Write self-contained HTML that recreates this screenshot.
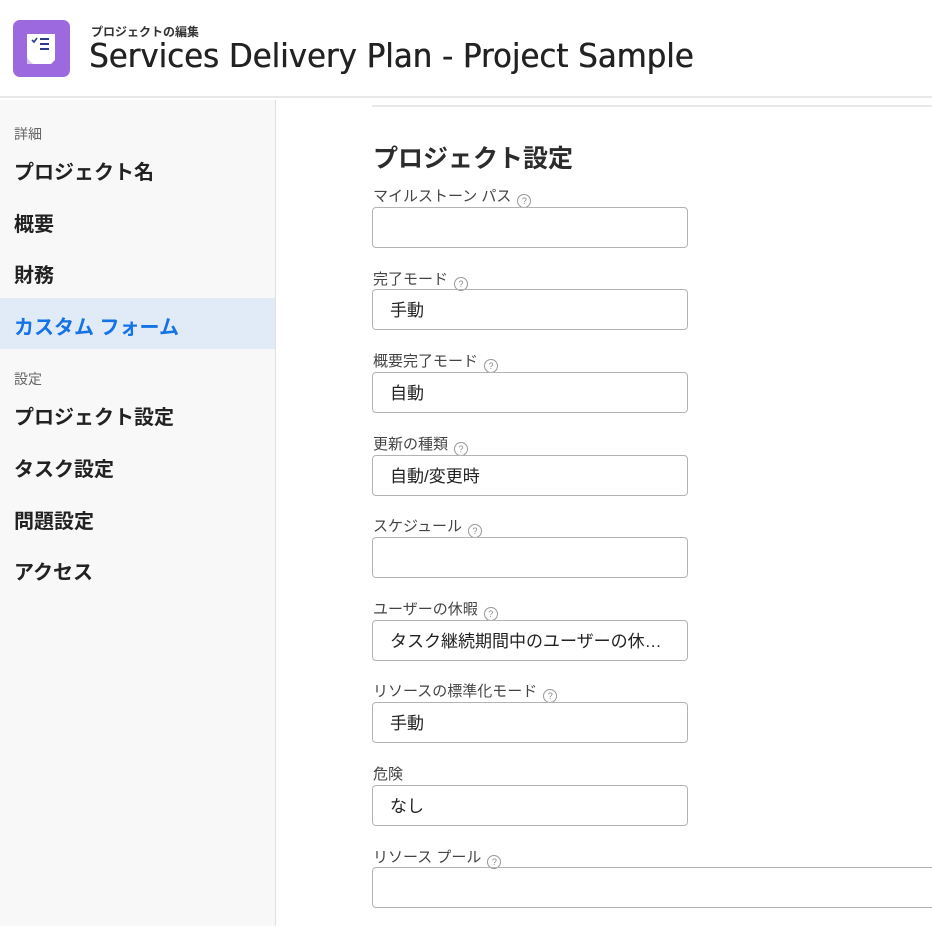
<!DOCTYPE html>
<html><head><meta charset="utf-8"><style>
*{margin:0;padding:0;box-sizing:border-box}
body{width:932px;height:926px;overflow:hidden;background:#fff;font-family:"Liberation Sans","Noto Sans CJK JP",sans-serif;color:#2c2c2c;position:relative}
.hdr{position:absolute;left:0;top:0;width:932px;height:98px;border-bottom:2px solid #e8e8e8;background:#fff}
.logo{position:absolute;left:13px;top:20px;width:57px;height:57px;border-radius:7px;background:#9c69de}
.sub{position:absolute;left:91px;top:23px;font-size:12px;font-weight:bold;color:#333}
.title{position:absolute;left:89px;top:36px;font-size:33px;color:#222;font-family:"DejaVu Sans","Noto Sans CJK JP",sans-serif;transform:scaleX(0.934);transform-origin:0 0;text-shadow:0.5px 0 0 #222;white-space:nowrap}
.side{position:absolute;left:0;top:100px;width:276px;height:826px;background:#f8f8f8;border-right:1px solid #e1e1e1}
.sec{position:absolute;left:14px;font-size:14px;color:#666}
.it{position:absolute;left:14px;font-size:20px;font-weight:bold;color:#222}
.sel{position:absolute;left:0;top:298px;width:275px;height:51px;background:#e1ebf7}
.line{position:absolute;left:372px;top:105px;width:560px;height:2px;background:#e8e8e8}
h2{position:absolute;left:373px;top:139px;font-size:25px;font-weight:bold;color:#2c2c2c}
.lb{position:absolute;left:373px;font-size:15px;color:#444}
.q{display:inline-block;width:14px;height:14px;border:1px solid #999;border-radius:50%;font-size:9px;line-height:12px;text-align:center;color:#888;margin-left:6px;vertical-align:-3px}
.in{position:absolute;left:372px;width:316px;height:41px;border:1px solid #b3b3b3;border-radius:4px;font-size:17px;padding-left:17px;line-height:41px;color:#222;white-space:nowrap}
</style></head><body>
<div class="hdr">
<div class="logo"><svg width="57" height="57" viewBox="0 0 57 57"><path d="M14 14h28v26l-4 4H14z" fill="#fff"/><path d="M14 38l6 6h-6z" fill="#d9c9f0"/><path d="M19 20l2 2 3-4" stroke="#2b3c8a" stroke-width="1.6" fill="none"/><path d="M27 19h9M27 24h9M27 29h9" stroke="#2b3c8a" stroke-width="2"/></svg></div>
<div class="sub">プロジェクトの編集</div>
<div class="title">Services Delivery Plan - Project Sample</div>
</div>
<div class="side">
</div>
<div class="sel"></div>
<div class="sec" style="top:124px">詳細</div>
<div class="it" style="top:156px">プロジェクト名</div>
<div class="it" style="top:208px">概要</div>
<div class="it" style="top:259px">財務</div>
<div class="it" style="top:311px;color:#1473e6">カスタム フォーム</div>
<div class="sec" style="top:369px">設定</div>
<div class="it" style="top:401px">プロジェクト設定</div>
<div class="it" style="top:453px">タスク設定</div>
<div class="it" style="top:505px">問題設定</div>
<div class="it" style="top:556px">アクセス</div>
<div class="line"></div>
<h2>プロジェクト設定</h2>
<div class="lb" style="top:185px">マイルストーン パス<span class="q">?</span></div>
<div class="in" style="top:207px"></div>
<div class="lb" style="top:268px">完了モード<span class="q">?</span></div>
<div class="in" style="top:289px">手動</div>
<div class="lb" style="top:350px">概要完了モード<span class="q">?</span></div>
<div class="in" style="top:372px">自動</div>
<div class="lb" style="top:433px">更新の種類<span class="q">?</span></div>
<div class="in" style="top:455px">自動/変更時</div>
<div class="lb" style="top:515px">スケジュール<span class="q">?</span></div>
<div class="in" style="top:537px"></div>
<div class="lb" style="top:598px">ユーザーの休暇<span class="q">?</span></div>
<div class="in" style="top:620px">タスク継続期間中のユーザーの休…</div>
<div class="lb" style="top:680px">リソースの標準化モード<span class="q">?</span></div>
<div class="in" style="top:702px">手動</div>
<div class="lb" style="top:763px">危険</div>
<div class="in" style="top:785px">なし</div>
<div class="lb" style="top:846px">リソース プール<span class="q">?</span></div>
<div class="in" style="top:867px;width:580px"></div>
</body></html>
